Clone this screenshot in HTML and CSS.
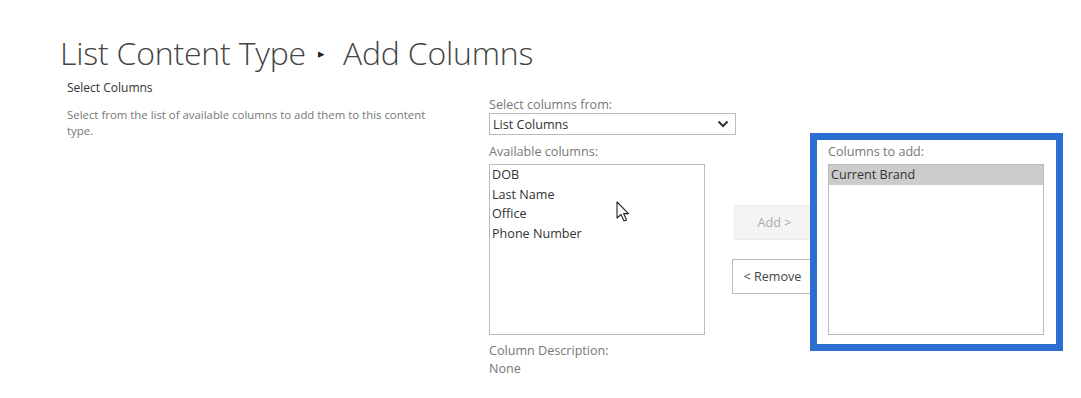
FILE: index.html
```html
<!DOCTYPE html>
<html>
<head>
    <meta charset="utf-8">
    <title>Add Columns</title>
    <link rel="stylesheet" href="styles.css">
</head>
<body>
    <div class="page">
        <h1 class="page-title">List Content Type <span class="crumb-arrow">&#9656;</span> Add Columns</h1>

        <div class="form-section">
            <div class="section-info">
                <h3>Select Columns</h3>
                <p>Select from the list of available columns to add them to this content type.</p>
            </div>

            <div class="section-body">
                <label class="field-label">Select columns from:</label>
                <div class="select-box">
                    <span>List Columns</span>
                    <svg class="chevron" width="12" height="8" viewBox="0 0 12 8">
                        <path d="M1.5 1.5 L6 6 L10.5 1.5" fill="none" stroke="#333" stroke-width="2"/>
                    </svg>
                </div>

                <div class="picker-row">
                    <div class="picker-col">
                        <label class="field-label">Available columns:</label>
                        <div class="list-box">
                            <div class="list-item">DOB</div>
                            <div class="list-item">Last Name</div>
                            <div class="list-item">Office</div>
                            <div class="list-item">Phone Number</div>
                        </div>
                        <div class="col-desc">
                            <div>Column Description:</div>
                            <div>None</div>
                        </div>
                    </div>

                    <div class="picker-buttons">
                        <button class="btn btn-add" disabled>Add &gt;</button>
                        <button class="btn btn-remove">&lt; Remove</button>
                    </div>

                    <div class="picker-col add-panel">
                        <label class="field-label">Columns to add:</label>
                        <div class="list-box">
                            <div class="list-item selected">Current Brand</div>
                        </div>
                    </div>
                </div>
            </div>
        </div>
    </div>

    <svg class="cursor" width="14" height="22" viewBox="0 0 14 22">
        <path d="M1 1 L1 17 L5 13.5 L8 20 L10.5 19 L7.6 12.6 L12.5 12.6 Z" fill="#fff" stroke="#222" stroke-width="1.1" stroke-linejoin="round"/>
    </svg>
</body>
</html>
```

FILE: styles.css
```css
body {
    font-family: "Open Sans", "Noto Sans", sans-serif;
    margin: 0;
    padding: 0;
    background-color: #ffffff;
    color: #333333;
}

.page {
    padding: 29px 0 0 60px;
}

.page-title {
    font-size: 32px;
    font-weight: 300;
    color: #444444;
    margin: 0;
    line-height: 48px;
    letter-spacing: -0.2px;
}

.crumb-arrow {
    font-size: 13px;
    color: #222222;
    vertical-align: 7px;
    margin: 0 10px 0 4px;
}

.form-section {
    display: flex;
    margin-top: 3px;
}

.section-info {
    width: 370px;
    padding-left: 7px;
}

.section-info h3 {
    font-size: 12px;
    font-weight: 400;
    color: #333333;
    margin: 0;
    line-height: 16px;
}

.section-info p {
    font-size: 11.4px;
    color: #777777;
    margin: 11px 0 0 0;
    line-height: 16px;
}

.section-body {
    margin-left: 52px;
    padding-top: 16px;
}

.field-label {
    display: block;
    font-size: 12.6px;
    color: #777777;
    line-height: 17px;
}

.select-box {
    width: 236px;
    height: 20px;
    border: 1px solid #bbbbbb;
    display: flex;
    align-items: center;
    justify-content: space-between;
    padding: 0 6px 0 3px;
    font-size: 12.6px;
    color: #333333;
    margin-bottom: 8px;
}

.picker-row {
    display: flex;
    align-items: flex-start;
}

.picker-col .field-label {
    margin-bottom: 4px;
}

.list-box {
    width: 214px;
    height: 169px;
    border: 1px solid #bbbbbb;
    background: #ffffff;
    font-size: 12.6px;
    color: #333333;
}

.list-item {
    height: 19.5px;
    line-height: 19.5px;
    padding-left: 2px;
}

.list-item.selected {
    background-color: #cccccc;
}

.col-desc {
    font-size: 12.6px;
    color: #777777;
    line-height: 18px;
    margin-top: 7px;
}

.picker-buttons {
    display: flex;
    flex-direction: column;
    width: 81px;
    margin-left: 27px;
    margin-right: -3px;
    padding-top: 62px;
}

.btn {
    font-family: inherit;
    font-size: 12.6px;
    height: 35px;
    width: 81px;
    border: 1px solid #bbbbbb;
    background: #ffffff;
    color: #444444;
    padding: 0;
}

.btn-add {
    margin-left: 2px;
    background: #f4f4f4;
    border-color: #eaeaea;
    color: #aaaaaa;
}

.btn-remove {
    margin-top: 19px;
}

.add-panel {
    position: relative;
    background: #ffffff;
    border: 7px solid #2d6fd1;
    padding: 3px 12px 9px 11px;
    margin-top: -10px;
}

.cursor {
    position: absolute;
    left: 616px;
    top: 201px;
}
```
